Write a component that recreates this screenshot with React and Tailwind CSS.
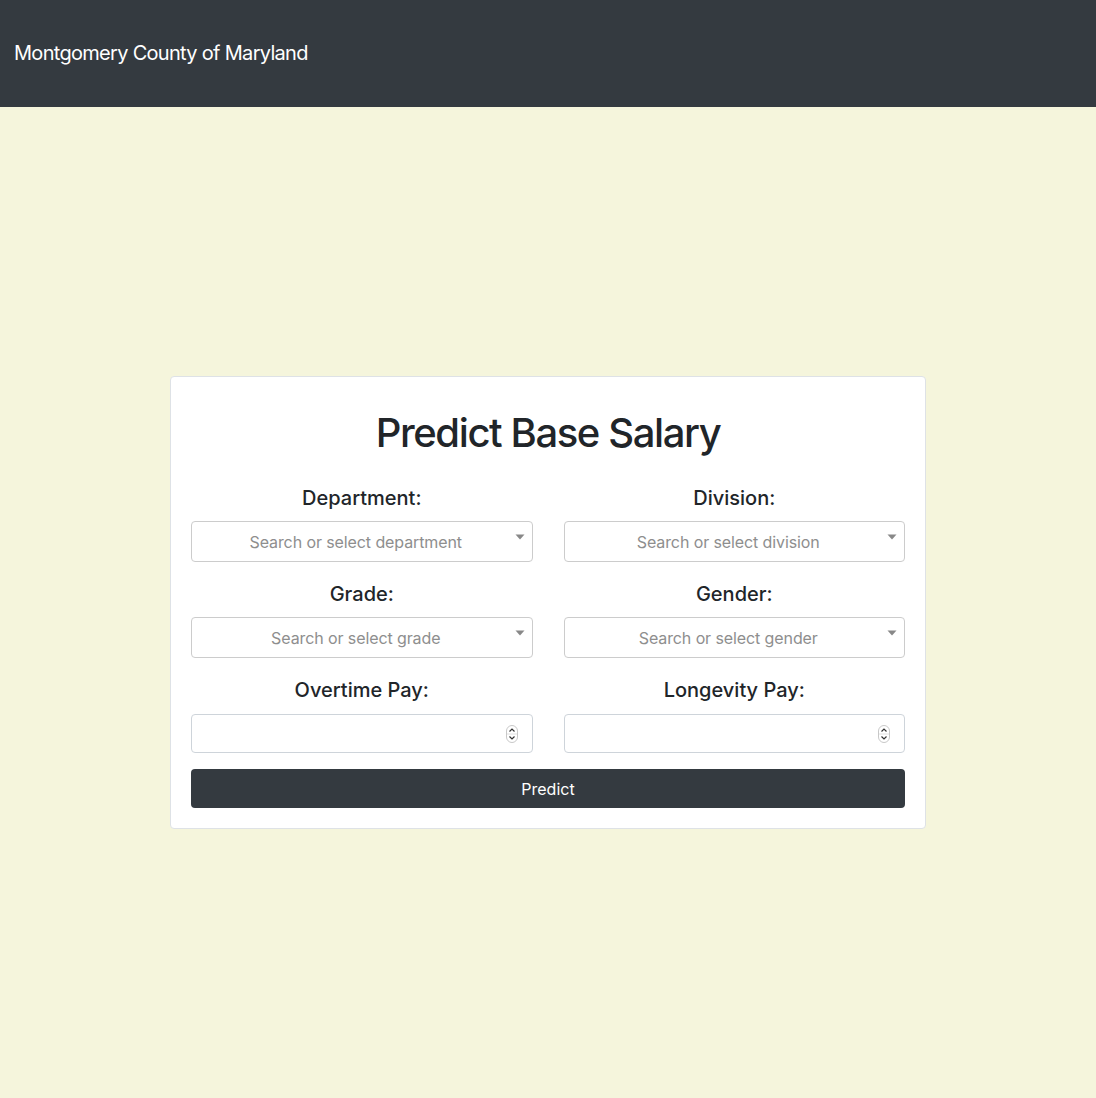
import React from 'react';

const font = { fontFamily: 'Inter, "Liberation Sans", sans-serif' };

const Caret = () => (
  <svg width="10" height="6" viewBox="0 0 10 6" className="absolute right-[7px] top-[12px]">
    <path d="M0.5 0.5 L9.5 0.5 L5 5.5 Z" fill="#888" />
  </svg>
);

const Spinner = () => (
  <svg width="12" height="18" viewBox="0 0 12 18" className="absolute right-[14px] top-[10px]">
    <rect x="0.5" y="0.5" width="11" height="17" rx="5.5" fill="#fff" stroke="#c8c8c8" />
    <line x1="1" y1="9" x2="11" y2="9" stroke="#e0e0e0" />
    <path d="M3.5 6.5 L6 4 L8.5 6.5" fill="none" stroke="#333" strokeWidth="1.2" />
    <path d="M3.5 11.5 L6 14 L8.5 11.5" fill="none" stroke="#333" strokeWidth="1.2" />
  </svg>
);

const SelectField = ({ label, placeholder }) => (
  <div className="flex flex-col">
    <label className="text-center text-[20px] leading-[24px] font-medium text-[#212529] mb-[11px]">{label}</label>
    <div className="relative h-[41px] rounded-[4px] border border-[#ccc] bg-white flex items-center justify-center pr-[12px]">
      <span className="text-[16px] text-[#8e8e8e] tracking-[-0.1px]">{placeholder}</span>
      <Caret />
    </div>
  </div>
);

const NumberField = ({ label }) => (
  <div className="flex flex-col">
    <label className="text-center text-[20px] leading-[24px] font-medium text-[#212529] mb-[12px]">{label}</label>
    <div className="relative h-[39px] rounded-[4px] border border-[#ced4da] bg-white">
      <Spinner />
    </div>
  </div>
);

export default function App() {
  return (
    <div className="min-h-screen flex flex-col bg-[#f5f5dc]" style={font}>
      <nav className="h-[107px] bg-[#343a40] flex items-center px-[14px]">
        <span className="text-white text-[20px] tracking-[-0.7px] -mt-[2px]">Montgomery County of Maryland</span>
      </nav>
      <main className="flex-1 flex items-center justify-center">
        <div className="w-[756px] bg-white border border-[#dee2e6] rounded-[4px] px-[20px] pt-[32px] pb-[20px]">
          <h1 className="text-center text-[40px] leading-[48px] font-medium text-[#212529] tracking-[-1.4px] mb-[29px]">Predict Base Salary</h1>
          <div className="grid grid-cols-2 gap-x-[31px] gap-y-[20px]">
            <SelectField label="Department:" placeholder="Search or select department" />
            <SelectField label="Division:" placeholder="Search or select division" />
            <SelectField label="Grade:" placeholder="Search or select grade" />
            <SelectField label="Gender:" placeholder="Search or select gender" />
            <NumberField label="Overtime Pay:" />
            <NumberField label="Longevity Pay:" />
          </div>
          <button className="mt-[16px] w-full h-[39px] rounded-[4px] bg-[#343a40] text-white text-[16px]">Predict</button>
        </div>
      </main>
    </div>
  );
}
